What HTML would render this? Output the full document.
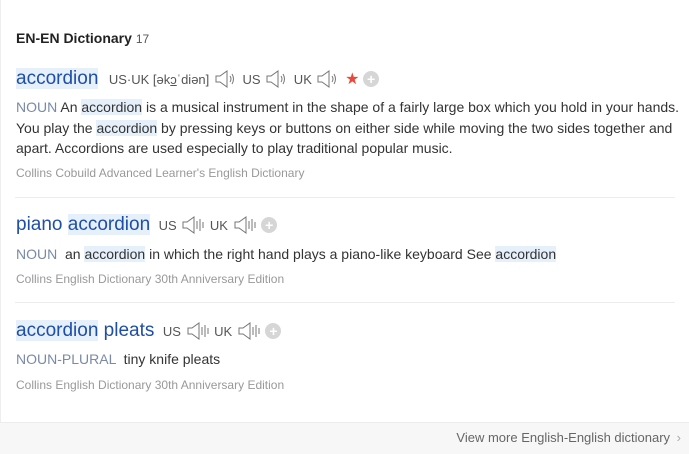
<!DOCTYPE html>
<html><head><meta charset="utf-8"><style>
body{margin:0;width:689px;height:453px;background:#fff;font-family:"Liberation Sans",Arial,sans-serif;position:relative;overflow:hidden;color:#333}
.a{position:absolute;white-space:nowrap}
.hw{font-size:19px;color:#1f4ea8}
.hl{background:#e6f0fb}
.ph{font-size:13px;color:#555}
.def{font-size:14px;color:#333;line-height:20.5px}
.pos{color:#7a8aa6}
.src{font-size:12px;color:#999}
.sep{position:absolute;left:15px;width:660px;height:1px;background:#ececec}
.sp{display:inline-block;vertical-align:-4px;margin:0 2px}
.plus{display:inline-block;width:16px;height:16px;border-radius:50%;background:#d6d6d6;color:#fff;font-size:14px;line-height:16px;text-align:center;vertical-align:0px;font-weight:bold}
</style></head><body>
<div style="position:absolute;left:0;top:0;width:1px;height:453px;background:#eee"></div>
<div class="a" style="left:16px;top:30px;font-size:14px;font-weight:bold;color:#222">EN-EN Dictionary <span style="font-weight:normal;font-size:12px;color:#555">17</span></div>

<div class="a" style="left:16px;top:68px"><span class="hw hl">accordion</span>
<span class="ph" style="margin-left:6px">US·UK [ək<u>ɔ</u>ˈdiən] <svg class="sp" width="22" height="18"><path d="M1 6h4l7-5v16l-7-5H1z" fill="none" stroke="#777"/><path d="M15 6q2 3 0 6M17 4q3 5 0 10" fill="none" stroke="#777"/></svg> US <svg class="sp" width="22" height="18"><path d="M1 6h4l7-5v16l-7-5H1z" fill="none" stroke="#777"/><path d="M15 6q2 3 0 6M17 4q3 5 0 10" fill="none" stroke="#777"/></svg> UK <svg class="sp" width="22" height="18"><path d="M1 6h4l7-5v16l-7-5H1z" fill="none" stroke="#777"/><path d="M15 6q2 3 0 6M17 4q3 5 0 10" fill="none" stroke="#777"/></svg> <span style="color:#e8493a;font-size:16px">★</span> <span class="plus">+</span></span></div>
<div class="a def" style="left:16px;top:97px"><span class="pos">NOUN</span> An <span class="hl">accordion</span> is a musical instrument in the shape of a fairly large box which you hold in your hands.<br>You play the <span class="hl">accordion</span> by pressing keys or buttons on either side while moving the two sides together and<br>apart. Accordions are used especially to play traditional popular music.</div>
<div class="a src" style="left:16px;top:166px">Collins Cobuild Advanced Learner's English Dictionary</div>
<div class="sep" style="top:197px"></div>

<div class="a" style="left:16px;top:214px"><span class="hw">piano <span class="hl">accordion</span></span>
<span class="ph" style="margin-left:4px">US <svg class="sp" width="22" height="18"><path d="M1 6h4l7-5v16l-7-5H1z" fill="none" stroke="#777"/><path d="M15 5v8M18 3v12M21 6v6" stroke="#777"/></svg> UK <svg class="sp" width="22" height="18"><path d="M1 6h4l7-5v16l-7-5H1z" fill="none" stroke="#777"/><path d="M15 5v8M18 3v12M21 6v6" stroke="#777"/></svg> <span class="plus">+</span></span></div>
<div class="a def" style="left:16px;top:244px"><span class="pos">NOUN</span> &nbsp;an <span class="hl">accordion</span> in which the right hand plays a piano-like keyboard See <span class="hl">accordion</span></div>
<div class="a src" style="left:16px;top:272px">Collins English Dictionary 30th Anniversary Edition</div>
<div class="sep" style="top:302px"></div>

<div class="a" style="left:16px;top:320px"><span class="hw"><span class="hl">accordion</span> pleats</span>
<span class="ph" style="margin-left:4px">US <svg class="sp" width="22" height="18"><path d="M1 6h4l7-5v16l-7-5H1z" fill="none" stroke="#777"/><path d="M15 5v8M18 3v12M21 6v6" stroke="#777"/></svg> UK <svg class="sp" width="22" height="18"><path d="M1 6h4l7-5v16l-7-5H1z" fill="none" stroke="#777"/><path d="M15 5v8M18 3v12M21 6v6" stroke="#777"/></svg> <span class="plus">+</span></span></div>
<div class="a def" style="left:16px;top:349px"><span class="pos">NOUN-PLURAL</span> &nbsp;tiny knife pleats</div>
<div class="a src" style="left:16px;top:378px">Collins English Dictionary 30th Anniversary Edition</div>

<div style="position:absolute;left:0;top:422px;width:689px;height:31px;background:#f7f7f7;border-top:1px solid #ececec"></div>
<div class="a" style="right:8px;top:430px;font-size:13px;color:#666">View more English-English dictionary <span style="color:#aaa;margin-left:3px">›</span></div>
</body></html>
